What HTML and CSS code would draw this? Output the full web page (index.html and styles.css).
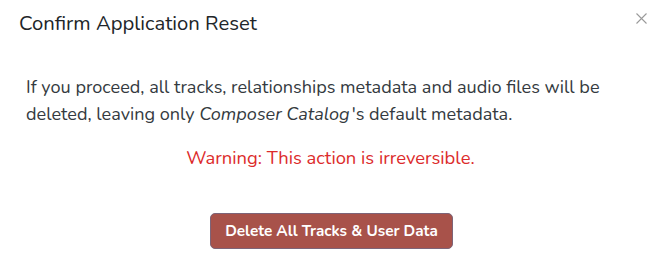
FILE: index.html
```html
<!DOCTYPE html>
<html lang="en">
<head>
  <meta charset="UTF-8" />
  <meta name="viewport" content="width=device-width, initial-scale=1" />
  <title>Confirm Application Reset</title>
  <link rel="stylesheet" href="styles.css">
</head>
<body>

<div class="modal">
  <div class="modal-header">
    <h2 class="modal-title">Confirm Application Reset</h2>
    <button class="btn-close" aria-label="Close">
      <svg width="11" height="11" viewBox="0 0 11 11">
        <path d="M0.5 0.5 L10.5 10.5 M10.5 0.5 L0.5 10.5" stroke="#9a9a9a" stroke-width="1.1" fill="none"/>
      </svg>
    </button>
  </div>

  <div class="modal-body">
    <p>If you proceed, all tracks, relationships metadata and audio files will be deleted, leaving only <em>Composer Catalog</em>'s default metadata.</p>
    <p class="warning">Warning: This action is irreversible.</p>
    <div class="actions">
      <button class="btn-danger">Delete All Tracks &amp; User Data</button>
    </div>
  </div>
</div>

</body>
</html>
```

FILE: styles.css
```css
body {
  margin: 0;
  font-family: "Nunito", Lato, "Noto Sans", sans-serif;
  background: #fff;
  color: #212529;
}

.modal {
  width: 661px;
  height: 260px;
  background: #fff;
}

.modal-header {
  display: flex;
  justify-content: space-between;
  align-items: flex-start;
  padding: 9px 14px 0 19px;
}

.modal-title {
  margin: 0;
  font-size: 20.3px;
  font-weight: 400;
  line-height: 28px;
}

.btn-close {
  background: none;
  border: none;
  padding: 0;
  margin-top: 4px;
  cursor: pointer;
  line-height: 0;
}

.modal-body {
  padding: 37px 40px 0 26px;
}

.modal-body p {
  margin: 0;
  font-size: 18.1px;
  line-height: 27px;
  color: #343a40;
}

.modal-body em {
  padding-right: 2px;
}

.modal-body .warning {
  margin-top: 16px;
  padding-left: 14px;
  text-align: center;
  color: #dc2b2b;
  font-size: 18.4px;
}

.actions {
  display: flex;
  justify-content: center;
  margin-top: 42px;
  padding-left: 16px;
}

.btn-danger {
  font-family: inherit;
  font-size: 15.3px;
  font-weight: 700;
  color: #fff;
  background: #a8524a;
  border: 1px solid #7d6478;
  border-radius: 5px;
  padding: 7px 14px;
  line-height: 20px;
  cursor: pointer;
}
```
